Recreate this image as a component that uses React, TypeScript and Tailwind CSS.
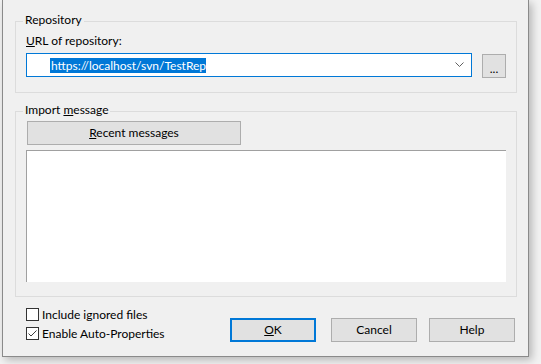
import React from "react";

const FONT = { fontFamily: 'Lato, "Noto Sans", sans-serif' };

function GroupBox({
  label,
  className,
  children,
}: {
  label: React.ReactNode;
  className: string;
  children: React.ReactNode;
}) {
  return (
    <div className={`relative border border-[#dcdcdc] ${className}`}>
      <span className="absolute left-[7px] top-[-10px] bg-[#f0f0f0] px-[2px] leading-[16px]">
        {label}
      </span>
      {children}
    </div>
  );
}

function WinButton({
  children,
  className = "",
  focused = false,
}: {
  children: React.ReactNode;
  className?: string;
  focused?: boolean;
}) {
  return (
    <button
      className={`flex h-[24px] items-center justify-center bg-[#e1e1e1] leading-[16px] text-black ${
        focused ? "border-2 border-[#0078d7]" : "border border-[#adadad]"
      } ${className}`}
    >
      {children}
    </button>
  );
}

function Checkbox({ label, checked }: { label: string; checked?: boolean }) {
  return (
    <div className="flex h-[19px] items-center">
      <div className="flex h-[13px] w-[13px] items-center justify-center border border-[#333333] bg-white">
        {checked && (
          <svg width="11" height="11" viewBox="0 0 11 11">
            <polyline
              points="1.5,5.5 4,8 9.5,2.5"
              fill="none"
              stroke="#3c3c3c"
              strokeWidth="1"
            />
          </svg>
        )}
      </div>
      <span className="ml-[3px] leading-[16px]">{label}</span>
    </div>
  );
}

export default function App() {
  return (
    <div
      className="h-[364px] w-[541px] overflow-hidden bg-[#f2f2f2] text-[12px] text-black"
      style={FONT}
    >
      <div className="ml-[2px] flex h-[357px] w-[527px] flex-col border-x border-b border-[#8a8a8a] bg-[#f0f0f0] shadow-[3px_3px_8px_rgba(0,0,0,0.25)]">
        <div className="pl-[12px] pt-[21px]">
          <GroupBox label="Repository" className="h-[72px] w-[502px]">
            <div className="pl-[10px] pt-[11px]">
              <div className="leading-[16px]">
                <span className="underline">U</span>RL of repository:
              </div>
              <div className="mt-[4px] flex items-start">
                <div className="flex h-[24px] w-[446px] items-center border border-[#0078d7] bg-white pl-[23px] pr-[4px]">
                  <span className="bg-[#0078d7] pl-[1px] leading-[15px] text-white">
                    https://localhost/svn/TestRep
                  </span>
                  <svg className="ml-auto mr-[3px]" width="9" height="6" viewBox="0 0 9 6">
                    <polyline points="0.5,0.5 4.5,4.5 8.5,0.5" fill="none" stroke="#606060" strokeWidth="1" />
                  </svg>
                </div>
                <WinButton className="ml-[10px] mt-[1px] w-[24px] items-end pb-[3px]">
                  <span className="leading-[10px]">...</span>
                </WinButton>
              </div>
            </div>
          </GroupBox>

          <GroupBox
            label={
              <>
                Import <span className="underline">m</span>essage
              </>
            }
            className="mt-[18px] h-[186px] w-[502px]"
          >
            <div className="pl-[10px] pt-[9px]">
              <WinButton className="ml-[1px] w-[214px]">
                <span>
                  <span className="underline">R</span>ecent messages
                </span>
              </WinButton>
              <div className="mt-[5px] h-[132px] w-[480px] border-l border-t border-[#a0a0a0] bg-white" />
            </div>
          </GroupBox>
        </div>

        <div className="mt-[8px] flex items-start pr-[13px]">
          <div className="ml-[23px] flex flex-col">
            <Checkbox label="Include ignored files" />
            <Checkbox label="Enable Auto-Properties" checked />
          </div>
          <div className="ml-auto mt-[13px] flex">
            <WinButton focused className="w-[86px]">
              <span>
                <span className="underline">O</span>K
              </span>
            </WinButton>
            <WinButton className="ml-[15px] w-[86px]">Cancel</WinButton>
            <WinButton className="ml-[12px] w-[86px]">Help</WinButton>
          </div>
        </div>
      </div>
    </div>
  );
}
